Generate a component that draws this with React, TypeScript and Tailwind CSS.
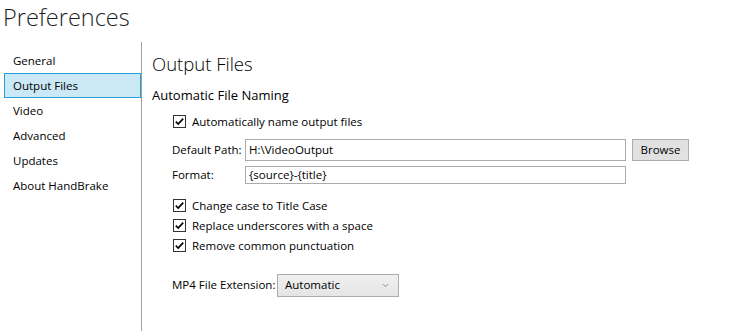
import {ChevronDown} from "lucide-react";

const navItems = ["General", "Output Files", "Video", "Advanced", "Updates", "About HandBrake"];

function CheckBox({label}: {label: string}) {
    return (
        <div className="h-[20px] flex items-center">
            <span className="ml-[1px] w-[13px] h-[13px] border border-[#333333] bg-white flex items-center justify-center">
                <svg width="11" height="11" viewBox="0 0 11 11">
                    <polyline points="1.8,5.6 4.2,8 9.2,2.6" fill="none" stroke="#000" strokeWidth="1.7" />
                </svg>
            </span>
            <span className="ml-[6px]">{label}</span>
        </div>
    );
}

export default function App() {
    return (
        <div className="w-[739px] h-[331px] bg-white overflow-hidden text-black text-[11.5px] whitespace-nowrap font-['Open_Sans','Noto_Sans',sans-serif]">
            <div className="h-[42px] pl-[3px] pt-[6px]">
                <h1 className="text-[23.5px] leading-none font-light text-[#1e1e1e]">Preferences</h1>
            </div>

            <div className="flex h-[289px]">
                <nav className="w-[142px] shrink-0 border-r border-[#a0a0a0] pt-[6px] pl-[4px]">
                    {navItems.map((item) => (
                        <div
                            key={item}
                            className={
                                item === "Output Files"
                                    ? "h-[25px] flex items-center pl-[8px] border border-[#26a0da] bg-[#cbe8f6]"
                                    : "h-[25px] flex items-center pl-[8px] border border-transparent"
                            }
                        >
                            {item}
                        </div>
                    ))}
                </nav>

                <main className="flex-1 pl-[10px]">
                    <h2 className="mt-[13px] text-[18.5px] leading-none font-light">Output Files</h2>
                    <h3 className="mt-[11px] text-[13px] leading-[20px]">Automatic File Naming</h3>

                    <div className="pl-[20px]">
                        <div className="mt-[7px]">
                            <CheckBox label="Automatically name output files" />
                        </div>

                        <div className="mt-[7px] flex items-center">
                            <span className="w-[73px]">Default Path:</span>
                            <div className="w-[381px] h-[22px] border border-[#ababab] flex items-center px-[3px]">H:\VideoOutput</div>
                            <button className="ml-[6px] w-[57px] h-[22px] bg-[#e1e1e1] border border-[#adadad]">Browse</button>
                        </div>

                        <div className="mt-[5px] flex items-center">
                            <span className="w-[73px]">Format:</span>
                            <div className="w-[381px] h-[18px] border border-[#ababab] flex items-center px-[3px]">{"{source}-{title}"}</div>
                        </div>

                        <div className="mt-[12px]">
                            <CheckBox label="Change case to Title Case" />
                            <CheckBox label="Replace underscores with a space" />
                            <CheckBox label="Remove common punctuation" />
                        </div>

                        <div className="mt-[18px] flex items-center">
                            <span className="w-[105px]">MP4 File Extension:</span>
                            <div className="w-[122px] h-[23px] border border-[#acacac] bg-gradient-to-b from-[#f0f0f0] to-[#e5e5e5] flex items-center justify-between pl-[7px] pr-[8px]">
                                <span>Automatic</span>
                                <ChevronDown className="w-[9px] h-[9px] text-[#707070]" strokeWidth={2} />
                            </div>
                        </div>
                    </div>
                </main>
            </div>
        </div>
    );
}
